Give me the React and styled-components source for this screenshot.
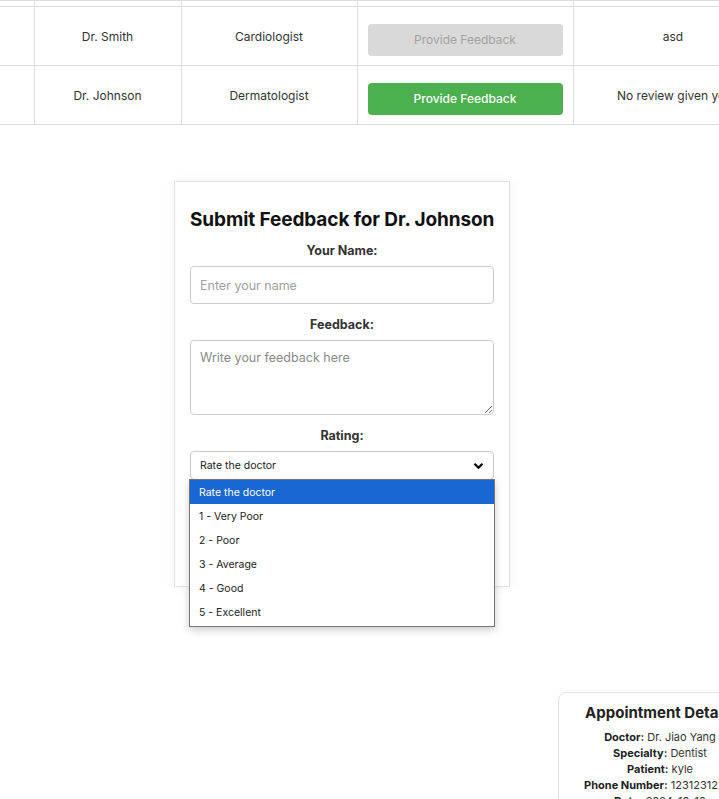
import React from "react";
import styled, { createGlobalStyle } from "styled-components";

const GlobalStyle = createGlobalStyle`
  body {
    margin: 0;
    width: 719px;
    height: 799px;
    overflow: hidden;
    background: #fff;
    font-family: Inter, "Open Sans", sans-serif;
    color: #333;
  }
`;

const Page = styled.div`
  display: flex;
  flex-direction: column;
  width: 719px;
`;

/* appointments table, page is scrolled so only the rows are visible */
const Table = styled.table`
  border-collapse: collapse;
  table-layout: fixed;
  width: 773px;
  font-size: 12px;

  td {
    border: 1px solid #ddd;
    text-align: center;
    padding: 0 10px;
  }
  td:first-child {
    border-left: none;
  }
`;

const CutRow = styled.tr`
  td {
    height: 5px;
    padding: 0;
  }
`;

const Row = styled.tr`
  td {
    height: 58px;
  }
`;

const FeedbackButton = styled.button`
  width: 100%;
  height: 32px;
  margin-top: 7px;
  border: none;
  border-radius: 4px;
  font-family: inherit;
  font-size: 12px;
  background: ${(p) => (p.$disabled ? "#d9d9d9" : "#4caf50")};
  color: ${(p) => (p.$disabled ? "#a3a3a3" : "#fff")};
  font-weight: ${(p) => (p.$disabled ? 400 : 500)};
`;

const FormCard = styled.div`
  width: 304px;
  margin: 56px 0 0 174px;
  padding: 15px;
  border: 1px solid #e2e2e2;
  box-shadow: 0 0 10px rgba(0, 0, 0, 0.06);
  background: #fff;
  display: flex;
  flex-direction: column;
  align-items: stretch;
`;

const Title = styled.h2`
  margin: 11px 0 12px;
  font-size: 19px;
  font-weight: 700;
  color: #111;
  text-align: center;
  white-space: nowrap;
  letter-spacing: -0.1px;
`;

const Label = styled.label`
  display: block;
  text-align: center;
  font-size: 12.5px;
  font-weight: 700;
  color: #333;
  margin: ${(p) => p.$top || "0"} 0 8px;
`;

const TextInput = styled.input`
  box-sizing: border-box;
  width: 100%;
  height: 38px;
  border: 1px solid #ccc;
  border-radius: 4px;
  padding: 0 9px;
  font-family: inherit;
  font-size: 12.5px;
  &::placeholder {
    color: #a0a0a0;
  }
`;

const TextArea = styled.textarea`
  box-sizing: border-box;
  display: block;
  width: 100%;
  height: 75px;
  border: 1px solid #ccc;
  border-radius: 4px;
  padding: 9px 9px;
  font-family: inherit;
  font-size: 12.5px;
  &::placeholder {
    color: #8a8a8a;
  }
`;

const SelectWrap = styled.div`
  position: relative;
`;

const SelectBox = styled.div`
  box-sizing: border-box;
  height: 29px;
  border: 1px solid #ccc;
  border-radius: 4px;
  padding: 0 9px;
  display: flex;
  align-items: center;
  justify-content: space-between;
  font-size: 10.5px;
  color: #222;
`;

const OptionList = styled.ul`
  position: absolute;
  top: 28px;
  left: -1px;
  right: -1px;
  margin: 0;
  padding: 0 0 2px;
  list-style: none;
  background: #fff;
  border: 1px solid #767676;
  box-shadow: 0 3px 8px rgba(0, 0, 0, 0.2);
  z-index: 2;
`;

const Option = styled.li`
  height: 24px;
  display: flex;
  align-items: center;
  padding: 0 9px;
  font-size: 10.5px;
  background: ${(p) => (p.$active ? "#1967d2" : "transparent")};
  color: ${(p) => (p.$active ? "#fff" : "#222")};
`;

const SubmitButton = styled.button`
  margin-top: 14px;
  height: 36px;
  border: none;
  border-radius: 4px;
  background: #4caf50;
  color: #fff;
  font-family: inherit;
  font-size: 13px;
`;

const Spacer = styled.div`
  height: 41px;
`;

const DetailsCard = styled.div`
  width: 190px;
  margin: 105px 0 0 558px;
  padding: 10px 6px;
  border: 1px solid #e2e2e2;
  border-radius: 8px;
  display: flex;
  flex-direction: column;
  align-items: center;
  white-space: nowrap;
`;

const DetailsTitle = styled.h3`
  margin: 0 0 7px;
  font-size: 15px;
  font-weight: 700;
  color: #222;
`;

const DetailLine = styled.p`
  margin: 0;
  line-height: 16px;
  font-size: 11px;
  color: #333;

  b {
    color: #222;
  }
`;

const Chevron = () => (
  <svg width="11" height="8" viewBox="0 0 11 8">
    <path d="M1.5 1.8 L5.5 5.8 L9.5 1.8" fill="none" stroke="#000" strokeWidth="2.2" />
  </svg>
);

const appointments = [
  { doctor: "Dr. Smith", specialty: "Cardiologist", reviewed: true, review: "asd" },
  { doctor: "Dr. Johnson", specialty: "Dermatologist", reviewed: false, review: "No review given yet" },
];

const ratings = ["Rate the doctor", "1 - Very Poor", "2 - Poor", "3 - Average", "4 - Good", "5 - Excellent"];

const details = [
  ["Doctor:", "Dr. Jiao Yang"],
  ["Specialty:", "Dentist"],
  ["Patient:", "kyle"],
  ["Phone Number:", "12312312312"],
  ["Date:", "2024-10-10"],
];

export default function App() {
  return (
    <Page>
      <GlobalStyle />
      <Table>
        <colgroup>
          <col style={{ width: 34 }} />
          <col style={{ width: 147 }} />
          <col style={{ width: 176 }} />
          <col style={{ width: 216 }} />
          <col style={{ width: 200 }} />
        </colgroup>
        <tbody>
          <CutRow>
            <td />
            <td />
            <td />
            <td />
            <td />
          </CutRow>
          {appointments.map((a) => (
            <Row key={a.doctor}>
              <td />
              <td>{a.doctor}</td>
              <td>{a.specialty}</td>
              <td>
                <FeedbackButton $disabled={a.reviewed}>Provide Feedback</FeedbackButton>
              </td>
              <td style={{ whiteSpace: "nowrap" }}>{a.review}</td>
            </Row>
          ))}
        </tbody>
      </Table>

      <FormCard>
        <Title>Submit Feedback for Dr. Johnson</Title>
        <Label>Your Name:</Label>
        <TextInput placeholder="Enter your name" />
        <Label $top="13px">Feedback:</Label>
        <TextArea placeholder="Write your feedback here" />
        <Label $top="13px">Rating:</Label>
        <SelectWrap>
          <SelectBox>
            <span>Rate the doctor</span>
            <Chevron />
          </SelectBox>
          <OptionList>
            {ratings.map((r, i) => (
              <Option key={r} $active={i === 0}>
                {r}
              </Option>
            ))}
          </OptionList>
        </SelectWrap>
        <SubmitButton>Submit Feedback</SubmitButton>
        <Spacer />
      </FormCard>

      <DetailsCard>
        <DetailsTitle>Appointment Details</DetailsTitle>
        {details.map(([k, v]) => (
          <DetailLine key={k}>
            <b>{k}</b> {v}
          </DetailLine>
        ))}
      </DetailsCard>
    </Page>
  );
}
